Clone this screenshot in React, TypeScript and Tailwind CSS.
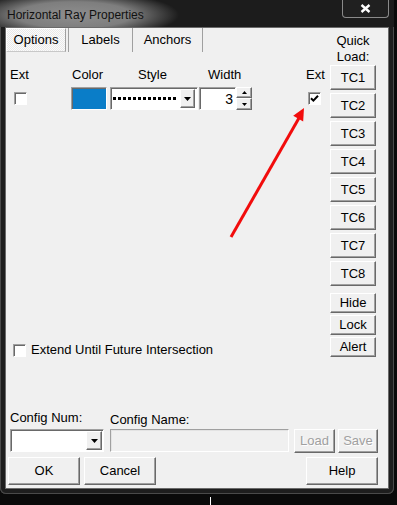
import React from "react";

const raised =
  "bg-[#f0f0f0] border border-t-white border-l-white border-b-[#696969] border-r-[#696969] shadow-[inset_-1px_-1px_0_#a0a0a0]";
const sunken =
  "border border-t-[#a0a0a0] border-l-[#a0a0a0] border-b-white border-r-white shadow-[inset_1px_1px_0_#696969]";

function CheckBox({ checked = false }: { checked?: boolean }) {
  return (
    <div className={`w-[13px] h-[13px] bg-white flex items-center justify-center ${sunken}`}>
      {checked && (
        <svg width="9" height="9" viewBox="0 0 9 9">
          <path d="M1 4.2 L3.4 6.6 L8 1.8" stroke="#000" strokeWidth="2" fill="none" />
        </svg>
      )}
    </div>
  );
}

function DownArrow() {
  return (
    <svg width="7" height="4" viewBox="0 0 7 4">
      <path d="M0 0 H7 L3.5 4 Z" fill="#000" />
    </svg>
  );
}

function ComboArrow({ className }: { className: string }) {
  return (
    <div className={`flex items-center justify-center ${raised} ${className}`}>
      <DownArrow />
    </div>
  );
}

function Btn({ label, className, disabled = false }: { label: string; className: string; disabled?: boolean }) {
  return (
    <div
      className={`flex items-center justify-center ${raised} ${className} ${
        disabled ? "text-[#a0a0a0] [text-shadow:1px_1px_0_#fff]" : "text-black"
      }`}
    >
      {label}
    </div>
  );
}

export default function App() {
  const tcs = ["TC1", "TC2", "TC3", "TC4", "TC5", "TC6", "TC7", "TC8"];

  return (
    <div className="w-[397px] h-[505px] bg-[#0a0a0a] relative overflow-hidden flex flex-col font-['Liberation_Sans',Arial,sans-serif] text-[13px] leading-[16px] text-black">
      {/* Window */}
      <div className="w-[394px] h-[494px] bg-[#1e1e1e] rounded-b-[6px] shadow-[inset_1px_0_0_#4a4a4a,inset_-1px_0_0_#4a4a4a,inset_0_-1px_0_#4a4a4a] flex flex-col shrink-0">
        {/* Title bar */}
        <div className="h-[27px] flex justify-between bg-[radial-gradient(ellipse_105px_24px_at_74px_15px,#8e8e8e_0%,#7e7e7e_55%,#1c1c1c_100%)]">
          <span className="text-[12px] leading-[14px] pl-[7px] pt-[8px] text-[#111]">Horizontal Ray Properties</span>
          <div className="w-[47px] h-[18px] mr-[5px] rounded-b-[4px] border border-t-0 border-[#8a8a8a] bg-[#202020] flex items-center justify-center">
            <svg width="11" height="9" viewBox="0 0 11 9">
              <path d="M1.5 1 L9.5 8 M9.5 1 L1.5 8" stroke="#fff" strokeWidth="2.4" />
            </svg>
          </div>
        </div>

        {/* Client */}
        <div className="ml-[5px] w-[384px] h-[462px] bg-[#f0f0f0] border border-[#6a6a6a] flex flex-col">
          <div className="flex">
            {/* Left column */}
            <div className="w-[320px] flex flex-col">
              {/* Tabs */}
              <div className="h-[24px] flex">
                <div className="w-[60px] h-[24px] bg-[repeating-conic-gradient(#fbfbfb_0_25%,#e9e9e9_0_50%)] bg-[length:2px_2px] border-t border-l border-white border-r border-r-[#a0a0a0] border-b border-b-[#c8c8c8] flex items-center justify-center">
                  Options
                </div>
                <div className="w-[64px] h-[24px] ml-[2px] border-l border-[#a0a0a0] flex items-center justify-center">Labels</div>
                <div className="w-[71px] h-[24px] border-l border-r border-[#a0a0a0] flex items-center justify-center">Anchors</div>
              </div>

              {/* Labels */}
              <div className="mt-[15px] h-[16px] flex pl-[4px]">
                <span className="w-[62px]">Ext</span>
                <span className="w-[66px]">Color</span>
                <span className="w-[70px]">Style</span>
                <span className="w-[98px]">Width</span>
                <span>Ext</span>
              </div>

              {/* Controls */}
              <div className="mt-[4px] h-[23px] flex items-start">
                <div className="ml-[8px] mt-[5px]">
                  <CheckBox />
                </div>
                <div className={`ml-[44px] w-[36px] h-[23px] bg-[#0a7dc8] ${sunken}`} />
                <div className={`ml-[3px] w-[88px] h-[23px] bg-white flex items-center pl-[2px] pr-[2px] ${sunken}`}>
                  <div className="flex-1 h-[3px] bg-[repeating-linear-gradient(90deg,#000_0_3px,transparent_3px_5px)]" />
                  <ComboArrow className="ml-[3px] w-[15px] h-[19px]" />
                </div>
                <div className={`ml-[1px] w-[37px] h-[23px] bg-white flex items-center justify-end pr-[2px] text-[14px] ${sunken}`}>
                  3
                </div>
                <div className="w-[16px] h-[23px] flex flex-col">
                  <div className={`h-[11px] flex items-center justify-center ${raised}`}>
                    <svg width="5" height="3" viewBox="0 0 5 3">
                      <path d="M0 3 H5 L2.5 0 Z" fill="#000" />
                    </svg>
                  </div>
                  <div className={`h-[12px] flex items-center justify-center ${raised}`}>
                    <svg width="5" height="3" viewBox="0 0 5 3">
                      <path d="M0 0 H5 L2.5 3 Z" fill="#000" />
                    </svg>
                  </div>
                </div>
                <div className="ml-[56px] mt-[5px]">
                  <CheckBox checked />
                </div>
              </div>

              {/* Extend */}
              <div className="mt-[232px] h-[16px] flex items-center">
                <div className="ml-[7px]">
                  <CheckBox />
                </div>
                <span className="ml-[5px]">Extend Until Future Intersection</span>
              </div>
            </div>

            {/* Right column */}
            <div className="w-[46px] ml-[4px] flex flex-col">
              <div className="mt-[5px] text-center">
                Quick
                <br />
                Load:
              </div>
              <div className="flex flex-col gap-[3px]">
                {tcs.map((t) => (
                  <Btn key={t} label={t} className="h-[25px]" />
                ))}
              </div>
              <div className="mt-[7px] flex flex-col gap-[2px]">
                <Btn label="Hide" className="h-[20px]" />
                <Btn label="Lock" className="h-[20px]" />
                <Btn label="Alert" className="h-[20px]" />
              </div>
            </div>
          </div>

          {/* Config labels */}
          <div className="mt-[52px] h-[16px] flex pl-[4px]">
            <span className="w-[100px]">Config Num:</span>
            <span className="mt-[2px]">Config Name:</span>
          </div>

          {/* Config controls */}
          <div className="mt-[3px] h-[24px] flex items-start">
            <div className={`ml-[4px] w-[94px] h-[23px] bg-white flex items-center justify-end pr-[1px] ${sunken}`}>
              <ComboArrow className="w-[16px] h-[19px]" />
            </div>
            <div className="ml-[6px] w-[179px] h-[23px] bg-[#f0f0f0] border border-t-[#a0a0a0] border-l-[#a0a0a0] border-b-white border-r-white shadow-[inset_1px_1px_0_#e3e3e3]" />
            <Btn label="Load" disabled className="ml-[5px] w-[41px] h-[24px]" />
            <Btn label="Save" disabled className="ml-[3px] w-[40px] h-[24px]" />
          </div>

          {/* Buttons */}
          <div className="mt-[4px] h-[28px] flex">
            <Btn label="OK" className="ml-[2px] w-[72px] h-[28px]" />
            <Btn label="Cancel" className="ml-[4px] w-[72px] h-[28px]" />
            <Btn label="Help" className="ml-auto mr-[10px] w-[72px] h-[28px]" />
          </div>
        </div>
      </div>

      {/* Chart beneath */}
      <div className="h-[11px] flex">
        <div className="ml-[210px] mt-[3px] w-px h-[8px] bg-white" />
      </div>

      {/* Red annotation arrow */}
      <svg className="absolute inset-0 pointer-events-none" width="397" height="505" viewBox="0 0 397 505">
        <line x1="231" y1="237" x2="299" y2="118" stroke="#f20c0c" strokeWidth="3" />
        <path d="M304 108 L303.2 121.5 L293.2 115.8 Z" fill="#f20c0c" />
      </svg>
    </div>
  );
}
